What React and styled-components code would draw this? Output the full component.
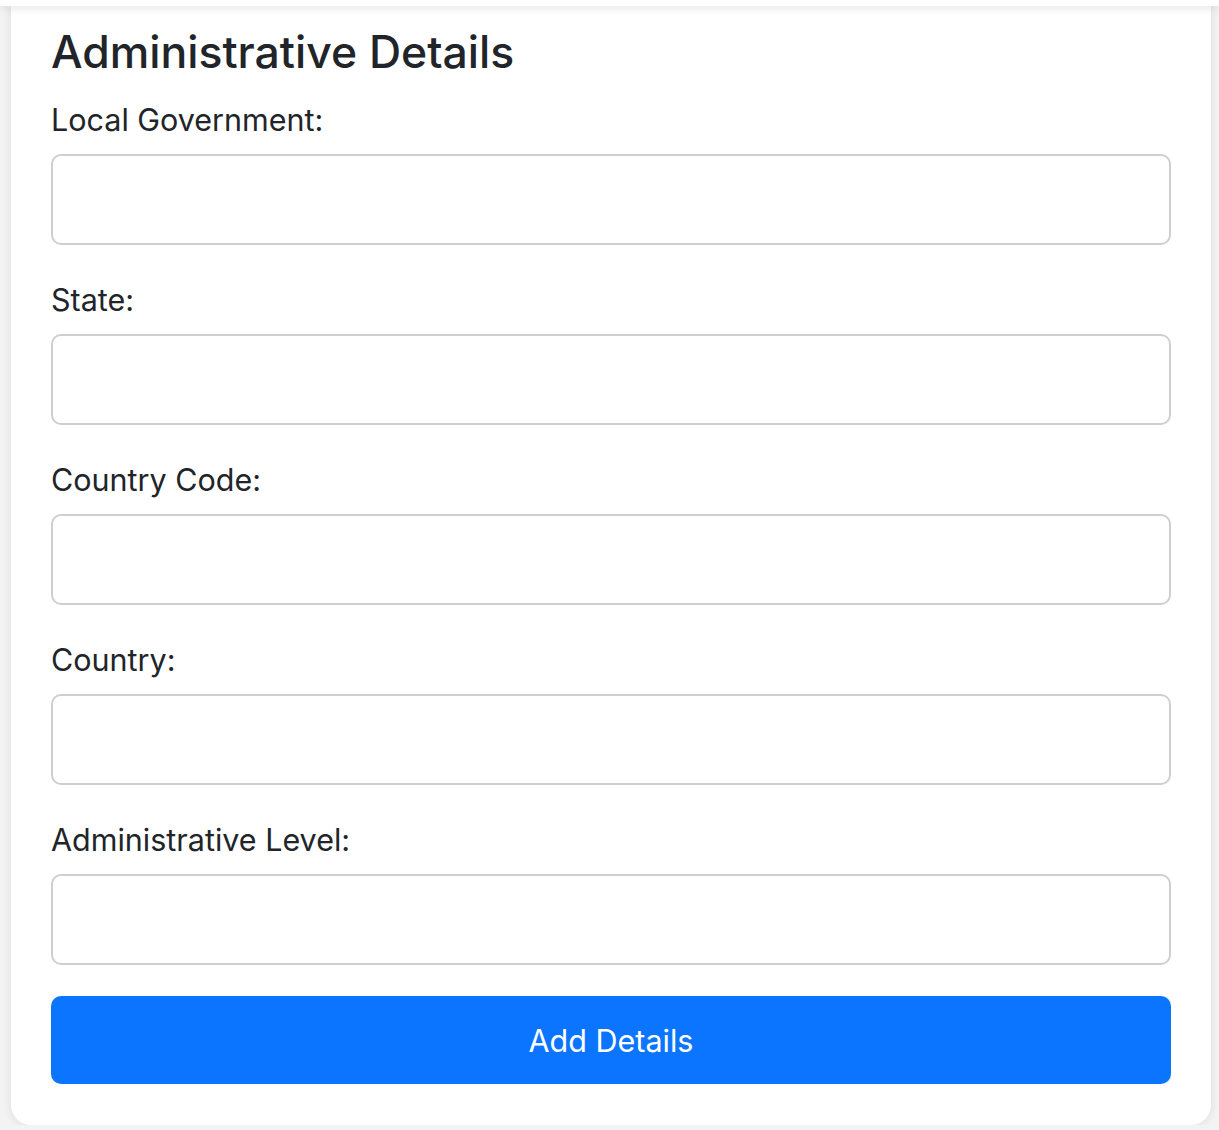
import React from 'react';
import styled, { createGlobalStyle } from 'styled-components';

const GlobalStyle = createGlobalStyle`
  body {
    margin: 0;
    background-color: #f3f3f3;
    font-family: Inter, "Noto Sans", "Liberation Sans", sans-serif;
    color: #212529;
  }
`;

const TopBar = styled.div`
  height: 6px;
  background-color: #fff;
  box-shadow: 0 2px 8px rgba(0, 0, 0, 0.12);
  position: relative;
  z-index: 1;
`;

const Page = styled.div`
  padding: 0 8px 0 11px;
`;

const Card = styled.div`
  box-sizing: border-box;
  width: 1200px;
  background-color: #fff;
  border-radius: 0 0 20px 20px;
  box-shadow: 0 0 10px rgba(0, 0, 0, 0.1);
  padding: 20px 40px 41px;
`;

const Title = styled.h2`
  font-size: 44.5px;
  font-weight: 500;
  line-height: 1.2;
  margin: 0 0 18px;
`;

const Field = styled.div`
  display: flex;
  flex-direction: column;
  gap: 12px;
  margin-bottom: 32px;

  &:last-of-type {
    margin-bottom: 31px;
  }
`;

const Label = styled.label`
  font-size: 30.5px;
  line-height: 45px;
`;

const Input = styled.input`
  box-sizing: border-box;
  width: 100%;
  height: 91px;
  border: 2px solid #cfcfcf;
  border-radius: 10px;
  padding: 0 20px;
  font-size: 30px;
  font-family: inherit;
  outline: none;
`;

const Button = styled.button`
  width: 100%;
  height: 88px;
  border: none;
  border-radius: 10px;
  background-color: #0b75ff;
  color: #fff;
  font-family: inherit;
  font-size: 30.5px;
  cursor: pointer;
`;

const fields = [
  'Local Government:',
  'State:',
  'Country Code:',
  'Country:',
  'Administrative Level:',
];

export default function App() {
  return (
    <>
      <GlobalStyle />
      <TopBar />
      <Page>
        <Card>
          <Title>Administrative Details</Title>
          <form onSubmit={(e) => e.preventDefault()}>
            {fields.map((f) => (
              <Field key={f}>
                <Label>{f}</Label>
                <Input type="text" />
              </Field>
            ))}
            <Button type="submit">Add Details</Button>
          </form>
        </Card>
      </Page>
    </>
  );
}
